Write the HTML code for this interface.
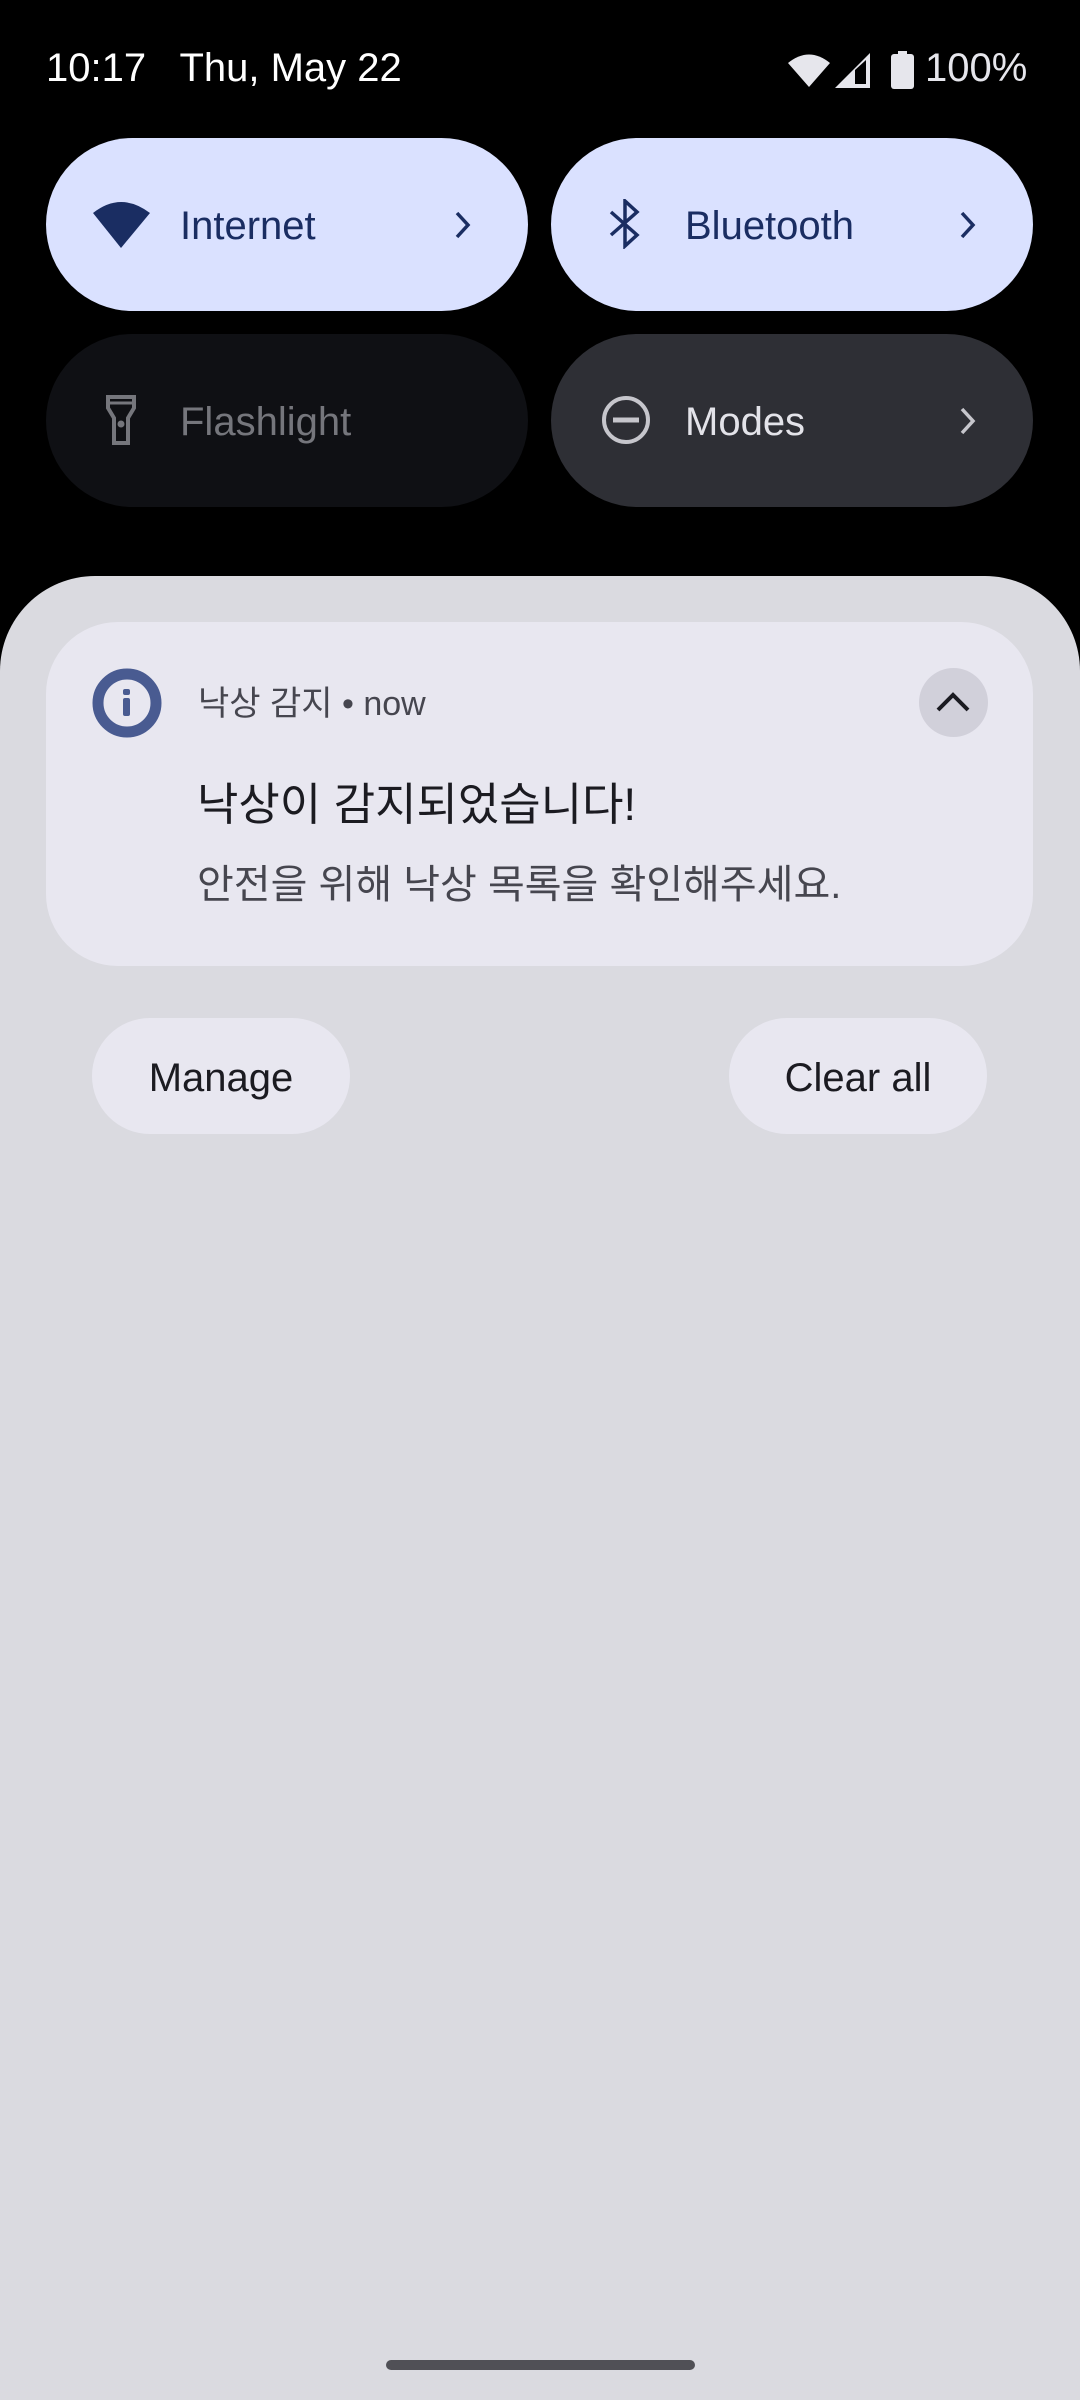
<!DOCTYPE html>
<html><head><meta charset="utf-8"><style>
*{margin:0;padding:0;box-sizing:border-box}
body{width:1080px;height:2400px;background:#000;position:relative;overflow:hidden;font-family:"Liberation Sans","Noto Sans CJK KR",sans-serif}
.abs{position:absolute}
.st{color:#fff;font-size:40px;top:45px;line-height:46px}
.tile{position:absolute;width:482px;height:173px;border-radius:87px}
.tl{position:absolute;left:134px;top:2px;line-height:173px;font-size:40px}
.chev{position:absolute;top:0;line-height:173px}
.panel{position:absolute;left:0;top:576px;width:1080px;height:1824px;background:#dadae0;border-radius:95px 95px 0 0}
.card{position:absolute;left:46px;top:622px;width:987px;height:344px;background:#e8e7f0;border-radius:72px}
.btn{position:absolute;top:1018px;height:116px;border-radius:58px;background:#e8e7f0;color:#1b1b21;font-size:40px;line-height:120px;text-align:center}
</style></head><body>
<div class="abs st" style="left:46px">10:17&nbsp;&nbsp;&nbsp;Thu, May 22</div>
<svg class="abs" style="left:788px;top:52px" width="44" height="36" viewBox="0 0 44 36"><path d="M0 11 Q21 -6 42 11 L21 35 Z" fill="#e6e6ec"/></svg>
<svg class="abs" style="left:835px;top:53px" width="36" height="35" viewBox="0 0 36 35"><path d="M35 0 L35 35 L0 35 Z" fill="#e6e6ec"/><path d="M20 17 L31 7 L31 31 L20 31 Z" fill="#000"/></svg>
<svg class="abs" style="left:891px;top:51px" width="23" height="38" viewBox="0 0 23 38"><rect x="7" y="0" width="9" height="4" fill="#e6e6ec"/><rect x="0" y="3" width="23" height="35" rx="3" fill="#e6e6ec"/></svg>
<div class="abs st" style="left:925px;color:#e6e6ec">100%</div>

<div class="tile" style="left:46px;top:138px;background:#dae1ff">
 <svg class="abs" style="left:46px;top:61px" width="60" height="50" viewBox="0 0 60 50"><path d="M1 14 Q29 -8 58 14 L29 49 Z" fill="#1a2d62"/></svg>
 <div class="tl" style="color:#1a2d62">Internet</div>
 <svg class="abs" style="left:407px;top:72px" width="20" height="30" viewBox="0 0 20 30"><path d="M4 3 L15 15 L4 27" stroke="#1a2d62" stroke-width="3.5" fill="none"/></svg>
</div>
<div class="tile" style="left:551px;top:138px;background:#dae1ff">
 <svg class="abs" style="left:58px;top:61px" width="32" height="50" viewBox="0 0 32 50"><path d="M2 13 L28 36 L16 47 L16 2 L28 13 L2 36" stroke="#1a2d62" stroke-width="3.5" fill="none" stroke-linejoin="miter"/></svg>
 <div class="tl" style="color:#1a2d62">Bluetooth</div>
 <svg class="abs" style="left:407px;top:72px" width="20" height="30" viewBox="0 0 20 30"><path d="M4 3 L15 15 L4 27" stroke="#1a2d62" stroke-width="3.5" fill="none"/></svg>
</div>
<div class="tile" style="left:46px;top:334px;background:#0f1014">
 <svg class="abs" style="left:60px;top:61px" width="32" height="51" viewBox="0 0 32 51"><path d="M2 2 H28 V13 L22 23 V48 H8 V23 L2 13 Z" stroke="#75767c" stroke-width="4" fill="none"/><path d="M2 8 H28" stroke="#75767c" stroke-width="3"/><circle cx="15" cy="29" r="3.5" fill="#75767c"/></svg>
 <div class="tl" style="color:#75767c">Flashlight</div>
</div>
<div class="tile" style="left:551px;top:334px;background:#2e2f35">
 <svg class="abs" style="left:50px;top:62px" width="50" height="50" viewBox="0 0 50 50"><circle cx="25" cy="24" r="22" stroke="#c6c6cc" stroke-width="4" fill="none"/><path d="M12 24 H38" stroke="#c6c6cc" stroke-width="5"/></svg>
 <div class="tl" style="color:#e3e3e9">Modes</div>
 <svg class="abs" style="left:407px;top:72px" width="20" height="30" viewBox="0 0 20 30"><path d="M4 3 L15 15 L4 27" stroke="#c6c6cc" stroke-width="3.5" fill="none"/></svg>
</div>

<div class="panel"></div>
<div class="card"></div>
<svg class="abs" style="left:92px;top:668px" width="70" height="70" viewBox="0 0 70 70"><circle cx="35" cy="35" r="29" stroke="#495b91" stroke-width="11" fill="#e8e7f0"/><rect x="31" y="21" width="7" height="6" rx="2" fill="#495b91"/><rect x="31" y="30" width="7" height="18" rx="2" fill="#495b91"/></svg>
<div class="abs" style="left:198px;top:682px;font-size:34px;line-height:44px;color:#46464f">낙상 감지 • now</div>
<div class="abs" style="left:919px;top:668px;width:69px;height:69px;border-radius:50%;background:#d1d0da"></div>
<svg class="abs" style="left:934px;top:688px" width="40" height="30" viewBox="0 0 40 30"><path d="M4 22 L19 7 L34 22" stroke="#1b1b21" stroke-width="4" fill="none"/></svg>
<div class="abs" style="left:197px;top:775px;font-size:45px;line-height:60px;color:#1b1b21">낙상이 감지되었습니다!</div>
<div class="abs" style="left:197px;top:858px;font-size:40px;line-height:54px;color:#46464f">안전을 위해 낙상 목록을 확인해주세요.</div>

<div class="btn" style="left:92px;width:258px">Manage</div>
<div class="btn" style="left:729px;width:258px">Clear all</div>

<div class="abs" style="left:386px;top:2360px;width:309px;height:10px;border-radius:5px;background:#505056"></div>
</body></html>
